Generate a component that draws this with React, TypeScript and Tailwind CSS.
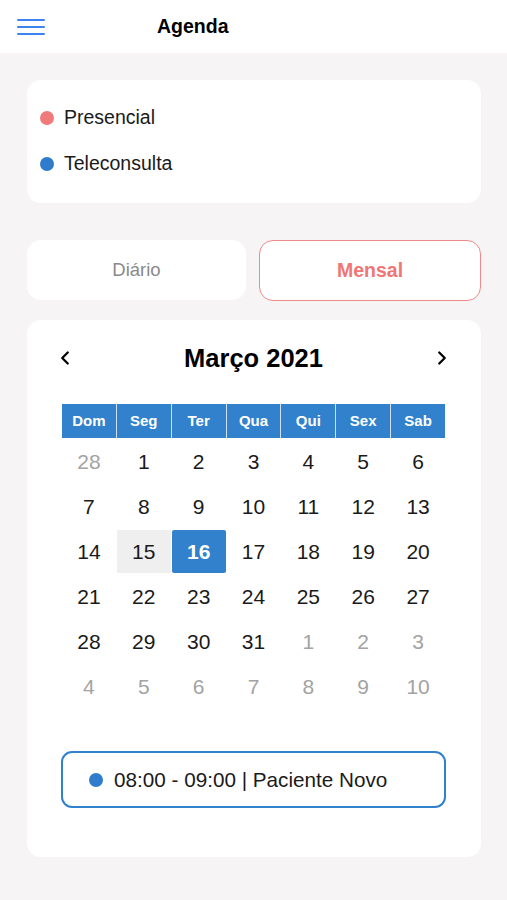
import { ChevronLeft, ChevronRight } from "lucide-react";

type Day = { n: number; muted?: boolean };

const weekDays = ["Dom", "Seg", "Ter", "Qua", "Qui", "Sex", "Sab"];

const weeks: Day[][] = [
  [{ n: 28, muted: true }, { n: 1 }, { n: 2 }, { n: 3 }, { n: 4 }, { n: 5 }, { n: 6 }],
  [{ n: 7 }, { n: 8 }, { n: 9 }, { n: 10 }, { n: 11 }, { n: 12 }, { n: 13 }],
  [{ n: 14 }, { n: 15 }, { n: 16 }, { n: 17 }, { n: 18 }, { n: 19 }, { n: 20 }],
  [{ n: 21 }, { n: 22 }, { n: 23 }, { n: 24 }, { n: 25 }, { n: 26 }, { n: 27 }],
  [{ n: 28 }, { n: 29 }, { n: 30 }, { n: 31 }, { n: 1, muted: true }, { n: 2, muted: true }, { n: 3, muted: true }],
  [4, 5, 6, 7, 8, 9, 10].map((n) => ({ n, muted: true })),
];

function DayCell({ day, row }: { day: Day; row: number }) {
  const isToday = row === 2 && day.n === 15;
  const isSelected = row === 2 && day.n === 16;
  let cls = "text-[#1a1a1a]";
  if (day.muted) cls = "text-[#a3a3a3]";
  if (isToday) cls = "bg-[#efefef] text-[#1a1a1a]";
  if (isSelected) cls = "bg-[#3181cc] text-white font-bold rounded-[2px]";
  return (
    <div className="h-[45px] flex items-center justify-center">
      <div className={`w-full h-[43px] flex items-center justify-center text-[21px] ${cls}`}>{day.n}</div>
    </div>
  );
}

export default function App() {
  return (
    <div className="min-h-screen bg-[#f6f4f4] font-['Liberation_Sans',Arial,sans-serif] text-[#1a1a1a]">
      {/* Header */}
      <div className="h-[53px] bg-white flex items-center px-[17px]">
        <div className="flex flex-col gap-[5px] w-[28px]">
          <span className="h-[2px] bg-[#3c82f0] rounded-full" />
          <span className="h-[2px] bg-[#3c82f0] rounded-full" />
          <span className="h-[2px] bg-[#3c82f0] rounded-full" />
        </div>
        <h1 className="ml-[112px] text-[19.5px] font-bold text-black">Agenda</h1>
      </div>

      <div className="pl-[27px] pr-[26px] pt-[27px] pb-[43px] flex flex-col">
        {/* Legend */}
        <div className="bg-white rounded-[14px] h-[123px] px-[13px] pt-[27px] flex flex-col gap-[25px]">
          <div className="flex items-center gap-[10px] text-[19.5px] leading-[21px]">
            <span className="w-[14px] h-[14px] rounded-full bg-[#f07a7a]" />
            Presencial
          </div>
          <div className="flex items-center gap-[10px] text-[19.5px] leading-[21px]">
            <span className="w-[14px] h-[14px] rounded-full bg-[#2f7ccc]" />
            Teleconsulta
          </div>
        </div>

        {/* Toggle */}
        <div className="mt-[37px] flex gap-[13px]">
          <button className="w-[219px] h-[60px] bg-white rounded-[14px] text-[18.5px] text-[#8a8a8a]">Diário</button>
          <button className="flex-1 h-[61px] bg-white rounded-[14px] border-[1.5px] border-[#f08a8a] text-[19.5px] font-bold text-[#f07676]">
            Mensal
          </button>
        </div>

        {/* Calendar */}
        <div className="mt-[19px] bg-white rounded-[14px] pt-[22px] pb-[49px] pl-[35px] pr-[36px]">
          <div className="h-[32px] flex items-center justify-between">
            <ChevronLeft className="w-[22px] h-[22px] -ml-[8px] text-black" strokeWidth={2.5} />
            <span className="text-[25.5px] font-bold text-black">Março 2021</span>
            <ChevronRight className="w-[22px] h-[22px] -mr-[8px] text-black" strokeWidth={2.5} />
          </div>

          <div className="mt-[30px] grid grid-cols-7 gap-x-px bg-[#cfe0f2]">
            {weekDays.map((d) => (
              <div key={d} className="h-[34px] bg-[#3181cc] flex items-center justify-center text-white font-bold text-[15px]">
                {d}
              </div>
            ))}
          </div>

          <div className="mt-[1px] grid grid-cols-7 gap-x-px">
            {weeks.map((w, r) => w.map((d, i) => <DayCell key={`${r}-${i}`} day={d} row={r} />))}
          </div>

          <div className="mt-[42px] -ml-[1px] -mr-[1px] h-[57px] border-2 border-[#3181cc] rounded-[11px] flex items-center pl-[26px] gap-[11px]">
            <span className="w-[14px] h-[14px] rounded-full bg-[#2f7ccc]" />
            <span className="text-[20.7px] text-[#1a1a1a]">08:00 - 09:00 | Paciente Novo</span>
          </div>
        </div>
      </div>
    </div>
  );
}
